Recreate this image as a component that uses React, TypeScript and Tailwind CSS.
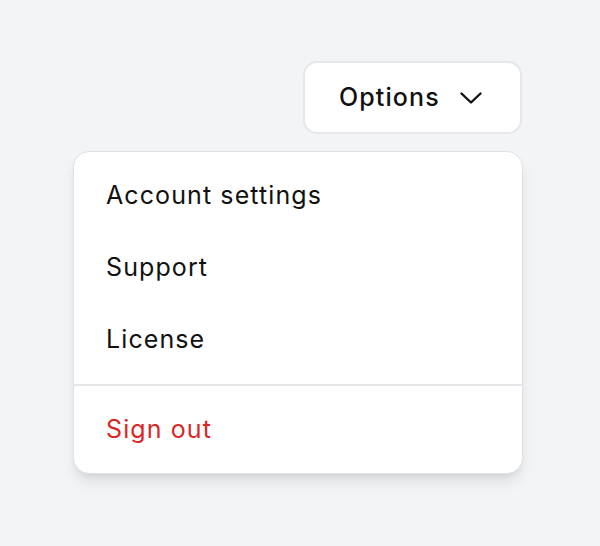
import { useState } from 'react';

const items = ['Account settings', 'Support', 'License'];

export default function App() {
    const [open] = useState(true);

    return (
        <div className="min-h-screen w-full bg-[#f3f4f6] pt-[61px] pr-[78px] flex justify-end" style={{ fontFamily: 'Inter, "Noto Sans", sans-serif' }}>
            <div className="flex flex-col items-end gap-[17px]">
                <button className="flex items-center h-[73px] w-[219px] pl-[34px] pr-[38px] rounded-[14px] border-2 border-[#e5e7eb] bg-white text-[25px] tracking-[1.1px] font-medium text-[#111111]">
                    <span>Options</span>
                    <svg className="ml-auto" width="22" height="12" viewBox="0 0 22 12" fill="none" stroke="#111111" strokeWidth="2.4" strokeLinecap="round" strokeLinejoin="round">
                        <path d="M1.5 1.5 11 10.5 20.5 1.5" />
                    </svg>
                </button>

                {/* dropdown */}
                {open && (
                    <div className="w-[450px] -mr-px rounded-[16px] border border-[#dfe1e5] bg-white shadow-lg">
                        <div className="py-2">
                            {items.map((label) => (
                                <div key={label} className="flex items-center h-[72px] pl-[32px] text-[25px] tracking-[1.1px] text-[#111111]">
                                    {label}
                                </div>
                            ))}
                        </div>
                        <div className="border-t-2 border-[#e5e7eb] py-2">
                            <div className="flex items-center h-[71px] pl-[32px] text-[25px] tracking-[1.1px] text-[#dc2626]">Sign out</div>
                        </div>
                    </div>
                )}
            </div>
        </div>
    );
}
